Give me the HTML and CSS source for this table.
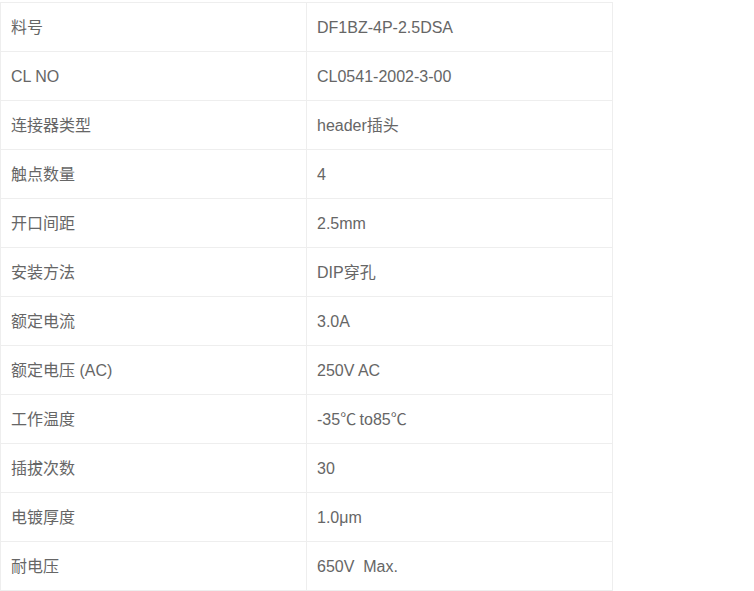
FILE: index.html
```html
<!DOCTYPE html>
<html lang="zh-CN">
<head>
<meta charset="utf-8">
<title>规格参数</title>
<link rel="stylesheet" href="styles.css">
</head>
<body>
<div class="spec">
  <div class="cell">料号</div><div class="cell">DF1BZ-4P-2.5DSA</div>
  <div class="cell">CL NO</div><div class="cell">CL0541-2002-3-00</div>
  <div class="cell">连接器类型</div><div class="cell">header插头</div>
  <div class="cell">触点数量</div><div class="cell">4</div>
  <div class="cell">开口间距</div><div class="cell">2.5mm</div>
  <div class="cell">安装方法</div><div class="cell">DIP穿孔</div>
  <div class="cell">额定电流</div><div class="cell">3.0A</div>
  <div class="cell">额定电压 (AC)</div><div class="cell">250V AC</div>
  <div class="cell">工作温度</div><div class="cell">-35<span class="cjk">℃</span> to85<span class="cjk">℃</span></div>
  <div class="cell">插拔次数</div><div class="cell">30</div>
  <div class="cell">电镀厚度</div><div class="cell">1.0μm</div>
  <div class="cell">耐电压</div><div class="cell">650V&nbsp; Max.</div>
</div>
</body>
</html>
```

FILE: styles.css
```css
html, body {
  margin: 0;
  padding: 0;
  background: #fff;
}
body {
  padding-top: 2px;
  font-family: "Liberation Sans", Arial, "Noto Sans CJK SC", sans-serif;
  font-size: 16px;
  color: #666;
}
.spec {
  display: grid;
  grid-template-columns: 306px 306px;
  width: max-content;
  border-top: 1px solid #eee;
  border-left: 1px solid #eee;
}
.cell {
  height: 48px;
  line-height: 50px;
  padding: 0 0 0 10px;
  border-right: 1px solid #eee;
  border-bottom: 1px solid #eee;
  white-space: nowrap;
  overflow: hidden;
}
.cjk {
  font-family: "Noto Sans CJK SC", sans-serif;
  line-height: 1;
  letter-spacing: -1px;
}
```
